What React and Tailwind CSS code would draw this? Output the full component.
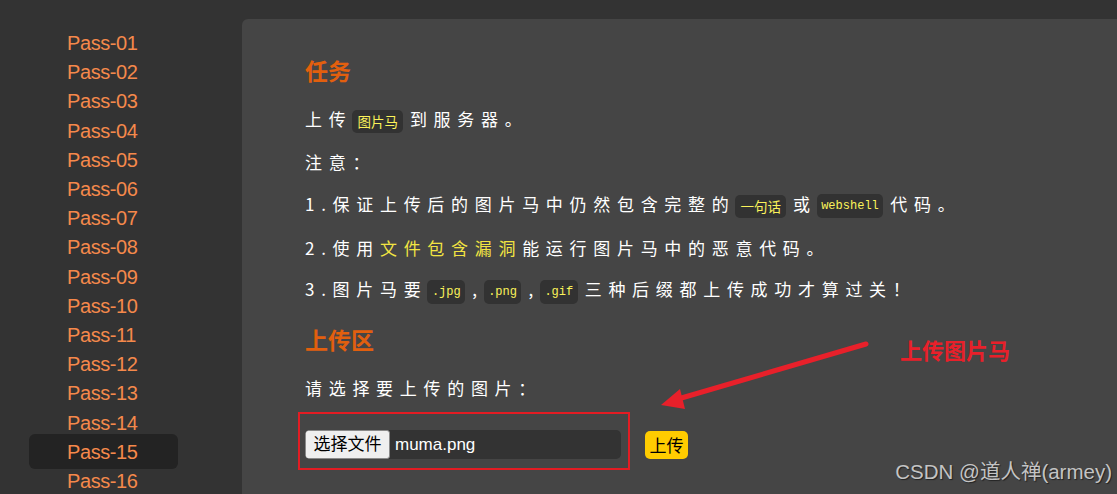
import React from "react";

const passes = Array.from({ length: 16 }, (_, i) => `Pass-${String(i + 1).padStart(2, "0")}`);

function Code({ children, mono }) {
  return mono ? (
    <span className="inline-block align-middle h-[24px] leading-[24px] px-[4.5px] mr-[7px] rounded-[5px] bg-[#323232] text-[#fbf35a] text-[12px] tracking-normal [font-family:'Liberation_Mono',monospace]">
      {children}
    </span>
  ) : (
    <span className="inline-block align-middle h-[23px] leading-[23px] px-[5px] mr-[7px] rounded-[5px] bg-[#323232] text-[#fbf35a] text-[13.5px] tracking-normal">
      {children}
    </span>
  );
}

export default function App() {
  return (
    <div className="relative flex w-[1117px] h-[494px] overflow-hidden bg-[#333333] [font-family:'Liberation_Sans','Noto_Sans_CJK_SC',sans-serif]">
      {/* Sidebar */}
      <div className="w-[242px] shrink-0 pt-[28.5px] pl-[29px]">
        {passes.map((p) => (
          <div
            key={p}
            className={
              p === "Pass-15"
                ? "w-[149px] h-[35.2px] -my-[3px] flex items-center pl-[38px] rounded-[6px] bg-[#232323] text-[20px] tracking-[-0.4px] text-[#f5894b]"
                : "w-[149px] h-[29.2px] flex items-center pl-[38px] text-[20px] tracking-[-0.4px] text-[#f5894b]"
            }
          >
            {p}
          </div>
        ))}
      </div>

      {/* Main panel */}
      <div className="flex-1 mt-[19px] bg-[#454545] rounded-tl-[6px] pl-[63px] pt-[36px] text-white [font-family:'Noto_Sans_CJK_SC','Liberation_Sans',sans-serif]">
        <div className="h-[30px] flex items-center text-[23px] font-bold text-[#e25f0e]">任务</div>
        <div className="mt-[13.2px] text-[17px] tracking-[6.7px]">
          <div className="h-[42.6px] flex items-center">
            <span>
              上传<Code>图片马</Code>到服务器。
            </span>
          </div>
          <div className="h-[42.6px] flex items-center">注意：</div>
          <div className="h-[42.6px] flex items-center">
            <span>
              1.保证上传后的图片马中仍然包含完整的<Code>一句话</Code>或<Code mono>webshell</Code>代码。
            </span>
          </div>
          <div className="h-[42.6px] flex items-center">
            <span>
              2.使用<span className="text-[#f2e442]">文件包含漏洞</span>能运行图片马中的恶意代码。
            </span>
          </div>
          <div className="h-[42.6px] flex items-center">
            <span>
              3.图片马要<Code mono>.jpg</Code>,<Code mono>.png</Code>,<Code mono>.gif</Code>三种后缀都上传成功才算过关！
            </span>
          </div>
        </div>
        <div className="mt-[12.8px] h-[30px] flex items-center text-[23px] font-bold text-[#e25f0e]">上传区</div>
        <div className="mt-[12.7px] h-[42.6px] flex items-center text-[17px] tracking-[6.7px]">请选择要上传的图片：</div>
        <div className="mt-[2.7px] flex items-start">
          <div className="-ml-[7px] border-2 border-[#e31c23] pt-[16px] pb-[9px] pl-[5px] pr-[7px]">
            <div className="flex h-[29px] w-[316px] rounded-[5px] bg-[#333333] overflow-hidden [font-family:'Liberation_Sans','Noto_Sans_CJK_SC',sans-serif]">
              <div className="w-[85px] h-full flex items-center justify-center bg-[#efefef] border border-[#8a8a8a] rounded-[3px] text-black text-[17px]">
                选择文件
              </div>
              <div className="flex items-center pl-[5px] text-[17px] text-white">muma.png</div>
            </div>
          </div>
          <div className="ml-[15px] mt-[19px] w-[43px] h-[28px] rounded-[5px] bg-[#ffcc00] flex items-center justify-center text-black text-[17px]">
            上传
          </div>
        </div>
      </div>

      {/* Annotation overlay */}
      <svg className="absolute left-0 top-0 pointer-events-none" width="1117" height="494" viewBox="0 0 1117 494">
        <line x1="866" y1="344" x2="678" y2="399" stroke="#e8202a" strokeWidth="5" strokeLinecap="round" />
        <polygon points="661,405 680,389 685,409" fill="#e8202a" />
      </svg>
      <div className="absolute left-[900px] top-[333px] text-[22px] font-bold text-[#e8202a] [font-family:'Noto_Sans_CJK_SC',sans-serif]">
        上传图片马
      </div>
      <div className="absolute right-[5px] top-[457px] text-[20.5px] text-[#c4c4c4] [text-shadow:1px_1px_1px_#222] [font-family:'Liberation_Sans','Noto_Sans_CJK_SC',sans-serif]">
        CSDN @道人禅(armey)
      </div>
    </div>
  );
}
